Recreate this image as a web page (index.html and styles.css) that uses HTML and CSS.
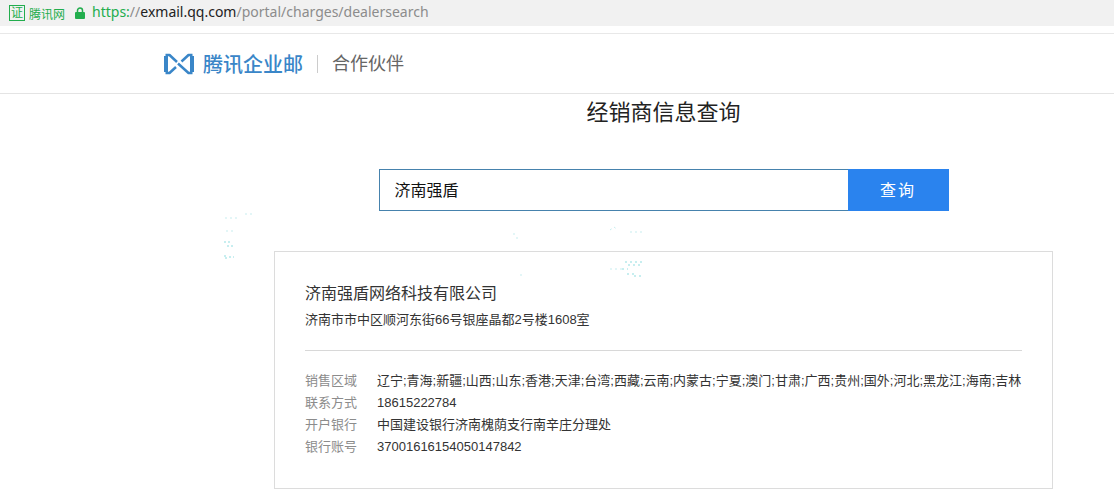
FILE: index.html
```html
<!DOCTYPE html>
<html lang="zh-CN">
<head>
  <meta charset="UTF-8" />
  <meta name="viewport" content="width=device-width, initial-scale=1.0"/>
  <title>经销商信息查询</title>
  <link rel="stylesheet" href="styles.css">
</head>
<body>

  <!-- Address bar -->
  <div class="address-bar">
    <span class="cert">证</span>
    <span class="site-name">腾讯网</span>
    <svg class="lock" viewBox="0 0 10 12" aria-hidden="true">
      <path d="M2.5 6V3.5a2.5 2.5 0 0 1 5 0V6" fill="none" stroke="#22ad4d" stroke-width="1.5"/>
      <rect x="0" y="5" width="10" height="7" rx="1" fill="#22ad4d"/>
    </svg>
    <span class="url"><span class="scheme">https:</span>//<span class="host">exmail.qq.com</span>/portal/charges/dealersearch</span>
  </div>

  <!-- Header -->
  <header class="header">
    <a href="#" class="brand">
      <svg class="logo" viewBox="0 0 30 22" aria-hidden="true">
        <g fill="none" stroke="#3a86c8">
          <path d="M2 3V19M28 3V19" stroke-width="4"/>
          <path d="M1.500 2H5.500L13 9M1.500 20H5.500L12 14M28.500 2H24.500L17.500 8.500M28.500 20H24.500L14 10.500" stroke-width="2.500" stroke-linejoin="round"/>
        </g>
      </svg>
      <span class="brand-name">腾讯企业邮</span>
    </a>
    <span class="partner">合作伙伴</span>
  </header>

  <main class="main">
    <h1>经销商信息查询</h1>

    <form class="search">
      <input type="text" id="dealer" value="济南强盾" aria-label="经销商名称" />
      <button type="submit">查询</button>
    </form>

    <!-- Dealer info -->
    <section class="card">
      <h2>济南强盾网络科技有限公司</h2>
      <p class="address">济南市市中区顺河东街66号银座晶都2号楼1608室</p>
      <dl class="details">
        <dt>销售区域</dt>
        <dd>辽宁;青海;新疆;山西;山东;香港;天津;台湾;西藏;云南;内蒙古;宁夏;澳门;甘肃;广西;贵州;国外;河北;黑龙江;海南;吉林</dd>
        <dt>联系方式</dt>
        <dd>18615222784</dd>
        <dt>开户银行</dt>
        <dd>中国建设银行济南槐荫支行南辛庄分理处</dd>
        <dt>银行账号</dt>
        <dd>37001616154050147842</dd>
      </dl>
    </section>

    <!-- Faint specks round the top of the card -->
    <svg class="specks" viewBox="0 0 430 80" aria-hidden="true">
      <g fill="none" stroke="#8fdde0" stroke-width="1">
        <path stroke-dasharray="2 2" d="M4 38h6M7 42h6M4 52h3M9 53h5M5 54h4"/>
        <path stroke-dasharray="2 3" d="M405 58h18M408 61h12M402 65h6M407 70h7M414 72h8"/>
        <path stroke-dasharray="2 3" opacity=".5" d="M5 14h12M25 10h8M6 27h8M390 26l4-3 4 3M410 28h12M293 30h4M296 34h3M390 65h12M300 71h5"/>
      </g>
    </svg>
  </main>

</body>
</html>
```
FILE: styles.css
```css
* {
  margin: 0;
  padding: 0;
  box-sizing: border-box;
}

body {
  background: #fff;
  color: #333;
  font-family: "Liberation Sans", "Noto Sans CJK SC", sans-serif;
  font-size: 13px;
}

.address-bar {
  display: flex;
  align-items: center;
  height: 26px;
  padding: 0 9px;
  background: #f1f1f1;
  color: #22ad4d;
  font-size: 12px;
}

.cert {
  width: 16px;
  height: 16px;
  border: 1px solid #22ad4d;
  line-height: 14px;
  text-align: center;
}

.site-name {
  margin: 0 10px 0 4px;
}

.lock {
  width: 10px;
  height: 12px;
  margin-right: 7px;
}

.url {
  color: #8c8c8c;
  font-family: "Noto Sans", sans-serif;
  font-size: 14px;
  line-height: 20px;
  padding-bottom: 2px;
}

.scheme {
  color: #22ad4d;
}

.host {
  color: #222;
}

.header {
  display: flex;
  align-items: center;
  height: 61px;
  margin-top: 7px;
  padding-left: 164px;
  border-top: 1px solid #e8e8e8;
  border-bottom: 1px solid #e4e4e4;
}

.brand {
  display: flex;
  align-items: center;
  color: #3a86c8;
  text-decoration: none;
}

.logo {
  width: 30px;
  height: 22px;
  margin-right: 9px;
}

.brand-name {
  font-size: 20px;
  font-weight: 500;
}

.partner {
  margin-left: 14px;
  padding-left: 14px;
  border-left: 1px solid #ccc;
  color: #666;
  font-size: 18px;
  line-height: 18px;
}

.main {
  position: relative;
  display: flex;
  flex-direction: column;
  align-items: center;
  padding: 2px 0 10px 213px;
}

h1 {
  color: #222;
  font-size: 22px;
  font-weight: 400;
  line-height: 34px;
}

.search {
  display: flex;
  width: 100%;
  max-width: 570px;
  height: 42px;
  margin: 39px 0 40px;
}

.search input {
  flex: 1;
  min-width: 0;
  padding: 0 15px 2px;
  border: 1px solid #4682ad;
  border-right: none;
  outline: none;
  color: #111;
  font-family: inherit;
  font-size: 16px;
}

.search button {
  width: 101px;
  padding-bottom: 3px;
  border: none;
  background: #2a83ee;
  color: #fff;
  font-family: inherit;
  font-size: 16px;
  letter-spacing: 2px;
  cursor: pointer;
}

.search button:hover {
  background: #1f74da;
}

.card {
  width: 100%;
  max-width: 779px;
  padding: 30px;
  border: 1px solid #dcdcdc;
}

h2 {
  font-size: 16px;
  font-weight: 400;
  line-height: 24px;
}

.address {
  padding: 3px 0 19px;
  border-bottom: 1px solid #d8d8d8;
  line-height: 22px;
}

.details {
  display: grid;
  grid-template-columns: 52px 1fr;
  column-gap: 20px;
  padding-top: 19px;
  line-height: 22px;
}

.details dt {
  color: #8c8c8c;
}

.details dd {
  white-space: nowrap;
}

.specks {
  position: absolute;
  top: 110px;
  left: 220px;
  width: 430px;
  height: 80px;
  pointer-events: none;
}
```
